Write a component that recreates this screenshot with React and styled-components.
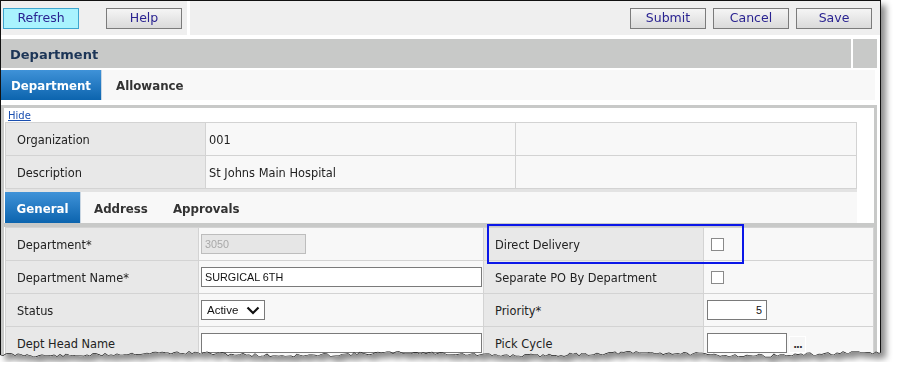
import React from 'react';
import styled, { createGlobalStyle } from 'styled-components';

// torn bottom edge of the screenshot, seeded so it is the same every run
const tearPoints = (() => {
  let s = 11;
  const rnd = () => {
    s = (s * 9301 + 49297) % 233280;
    return s / 233280;
  };
  const pts = [];
  for (let x = 0; x <= 884; x += 3) {
    pts.push([x, 353 + Math.sin(x / 37) * 1.4 + rnd() * 3.2]);
  }
  return pts;
})();

const clipPath = `polygon(0 0, 884px 0, ${tearPoints
  .slice()
  .reverse()
  .map(([x, y]) => `${x}px ${y.toFixed(1)}px`)
  .join(', ')})`;

const tearLine = tearPoints.map(([x, y]) => `${x},${y.toFixed(1)}`).join(' ');

const GlobalStyle = createGlobalStyle`
  html, body {
    margin: 0;
    padding: 0;
    background: #fff;
  }
  body {
    font-family: "DejaVu Sans", Verdana, sans-serif;
  }
`;

const Shot = styled.div`
  width: 884px;
  filter: drop-shadow(5px 5px 3px rgba(0, 0, 0, 0.45));
`;

const Frame = styled.div`
  position: relative;
  width: 881px;
  height: 362px;
  box-sizing: border-box;
  border: 1px solid #111;
  border-bottom: none;
  background: #fff;
  overflow: hidden;
`;

const TearEdge = styled.svg`
  position: absolute;
  left: -1px;
  top: -1px;
  pointer-events: none;
`;

const Toolbar = styled.div`
  display: flex;
  height: 34px;
  background: #efefef;
`;

const ToolGroup = styled.div`
  display: flex;
  align-items: center;
  gap: ${p => p.$gap}px;
  ${p => (p.$right
    ? 'flex: 1; justify-content: flex-end; padding-right: 8px;'
    : 'width: 184px; padding-left: 2px; border-right: 3px solid #fff;')}
`;

const ToolButton = styled.button`
  width: 76px;
  height: 21px;
  padding: 0 0 1px;
  font-family: "DejaVu Sans", Verdana, sans-serif;
  font-size: 12.5px;
  color: #2a2391;
  border: 1px solid ${p => (p.$primary ? '#3ea6cf' : '#7b7b7b')};
  background: ${p => (p.$primary ? '#a9f3fe' : 'linear-gradient(#f5f5f5, #dadada)')};
  cursor: pointer;
`;

const HeaderBar = styled.div`
  display: flex;
  gap: 2px;
  height: 29px;
  margin: 4px 3px 0 0;
`;

const HeaderTitle = styled.div`
  flex: 1;
  display: flex;
  align-items: center;
  padding: 2px 0 0 9px;
  background: #c8c9c8;
  color: #1c3557;
  font-size: 13px;
  font-weight: bold;
`;

const HeaderEnd = styled.div`
  width: 24px;
  background: #c8c9c8;
`;

const TabRow = styled.div`
  display: flex;
  align-items: stretch;
  height: ${p => p.$h}px;
  margin-top: ${p => p.$mt}px;
  margin-right: ${p => p.$mr}px;
  background: #f8f8f8;
`;

const Tab = styled.div`
  display: flex;
  align-items: center;
  justify-content: center;
  box-sizing: border-box;
  padding-top: 2px;
  ${p => (p.$w ? `width: ${p.$w}px;` : `padding-left: ${p.$pad}px; padding-right: ${p.$pad}px;`)}
  font-size: 11.8px;
  font-weight: bold;
  color: ${p => (p.$active ? '#fff' : '#333')};
  background: ${p => (p.$active ? 'linear-gradient(#3f92d8, #0c64ae)' : 'transparent')};
  border-right: ${p => (p.$active ? '1px solid #c9d6e2' : 'none')};
`;

const Panel = styled.div`
  margin: 5px 3px 0 0;
  border: 3px solid #c8c9c8;
  border-bottom: none;
  background: #fff;
`;

const OrgSection = styled.div`
  padding: 0 17px 0 1px;
`;

const HideLink = styled.a`
  display: block;
  height: 14px;
  padding: 1px 0 0 3px;
  box-sizing: border-box;
  font-size: 10px;
  line-height: 14px;
  color: #1a4fb0;
  text-decoration: underline;
`;

const Grid = styled.div`
  display: grid;
  grid-template-columns: ${p => p.$cols};
  grid-auto-rows: 33px;
  border-top: 1px solid #d3d3d3;
  border-left: 1px solid #d3d3d3;
`;

const Cell = styled.div`
  display: flex;
  align-items: center;
  gap: 2px;
  box-sizing: border-box;
  padding-left: ${p => (p.$label ? 11 : p.$pad ?? 2)}px;
  padding-top: ${p => (p.$label || p.$text ? 2 : 0)}px;
  border-right: 1px solid #d3d3d3;
  border-bottom: 1px solid #d3d3d3;
  background: ${p => (p.$label ? '#e8e8e8' : '#f8f8f8')};
  color: #222;
  font-size: 11.4px;
`;

const Rule = styled.div`
  height: ${p => p.$h}px;
  background: ${p => p.$c};
`;

const FormSection = styled.div`
  padding-left: 1px;
`;

const TextInput = styled.input`
  box-sizing: border-box;
  width: ${p => p.$w}px;
  height: 20px;
  padding: 0 ${p => (p.$right ? 4 : 3)}px 0 3px;
  margin: 0;
  font-family: "Liberation Sans", Arial, sans-serif;
  font-size: 10.8px;
  text-align: ${p => (p.$right ? 'right' : 'left')};
  color: ${p => (p.disabled ? '#a8a8a8' : '#111')};
  background: ${p => (p.disabled ? '#e6e6e6' : '#fff')};
  border: 1px solid ${p => (p.disabled ? '#bdbdbd' : '#7a7a7a')};
  border-radius: 0;
  outline: none;
`;

const SelectBox = styled.div`
  display: flex;
  align-items: center;
  justify-content: space-between;
  box-sizing: border-box;
  width: 64px;
  height: 20px;
  padding: 0 4px 0 5px;
  font-family: "Liberation Sans", Arial, sans-serif;
  font-size: 11.5px;
  color: #111;
  background: #fff;
  border: 1px solid #7a7a7a;
`;

const Check = styled.span`
  display: inline-block;
  box-sizing: border-box;
  width: 13px;
  height: 13px;
  background: #fff;
  border: 1px solid #8a8a8a;
`;

const LookupButton = styled.span`
  display: flex;
  align-items: flex-end;
  justify-content: center;
  box-sizing: border-box;
  width: 17px;
  height: 17px;
  margin-top: 3px;
  padding-bottom: 3px;
  background: #f6f6f6;
  border: 1px solid #fff;
  font-size: 10px;
  font-weight: bold;
  line-height: 8px;
  letter-spacing: -1px;
  color: #333;
`;

const Highlight = styled.div`
  position: absolute;
  left: 486px;
  top: 223px;
  width: 253px;
  height: 36px;
  border: 2px solid #0b17e8;
  pointer-events: none;
`;

const Chevron = () => (
  <svg width="14" height="9" viewBox="0 0 14 9">
    <path d="M1.5 1.5 L7 7 L12.5 1.5" fill="none" stroke="#111" strokeWidth="2.2" />
  </svg>
);

export default function App() {
  return (
    <>
      <GlobalStyle />
      <Shot>
        <Frame style={{ clipPath }}>
          <Toolbar>
            <ToolGroup $gap={27}>
              <ToolButton $primary>Refresh</ToolButton>
              <ToolButton>Help</ToolButton>
            </ToolGroup>
            <ToolGroup $right $gap={7}>
              <ToolButton>Submit</ToolButton>
              <ToolButton>Cancel</ToolButton>
              <ToolButton>Save</ToolButton>
            </ToolGroup>
          </Toolbar>

          <HeaderBar>
            <HeaderTitle>Department</HeaderTitle>
            <HeaderEnd />
          </HeaderBar>

          <TabRow $h={30} $mt={2} $mr={5}>
            <Tab $active $w={101}>Department</Tab>
            <Tab $pad={14}>Allowance</Tab>
          </TabRow>

          <Panel>
            <OrgSection>
              <HideLink href="#">Hide</HideLink>
              <Grid $cols="200px 310px 1fr">
                <Cell $label>Organization</Cell>
                <Cell $text $pad={3}>001</Cell>
                <Cell />
                <Cell $label>Description</Cell>
                <Cell $text $pad={3}>St Johns Main Hospital</Cell>
                <Cell />
              </Grid>
              <Rule $h={3} $c="#e3e3e3" />
              <TabRow $h={31} $mt={0} $mr={0}>
                <Tab $active $w={76}>General</Tab>
                <Tab $pad={13}>Address</Tab>
                <Tab $pad={12}>Approvals</Tab>
              </TabRow>
            </OrgSection>
            <Rule $h={4} $c="#c8c9c8" />
            <FormSection>
              <Grid $cols="193px 285px 220px 1fr">
                <Cell $label>Department*</Cell>
                <Cell><TextInput $w={105} defaultValue="3050" disabled /></Cell>
                <Cell $label>Direct Delivery</Cell>
                <Cell $pad={7}><Check /></Cell>

                <Cell $label>Department Name*</Cell>
                <Cell><TextInput $w={281} defaultValue="SURGICAL 6TH" /></Cell>
                <Cell $label>Separate PO By Department</Cell>
                <Cell $pad={7}><Check /></Cell>

                <Cell $label>Status</Cell>
                <Cell>
                  <SelectBox>Active<Chevron /></SelectBox>
                </Cell>
                <Cell $label>Priority*</Cell>
                <Cell $pad={3}><TextInput $w={60} $right defaultValue="5" /></Cell>

                <Cell $label>Dept Head Name</Cell>
                <Cell><TextInput $w={281} defaultValue="" /></Cell>
                <Cell $label>Pick Cycle</Cell>
                <Cell $pad={3}>
                  <TextInput $w={80} defaultValue="" />
                  <LookupButton>...</LookupButton>
                </Cell>
              </Grid>
            </FormSection>
          </Panel>

          <Highlight />

          <TearEdge width="884" height="370">
            <polyline points={tearLine} fill="none" stroke="#1a1a1a" strokeWidth="1.3" />
          </TearEdge>
        </Frame>
      </Shot>
    </>
  );
}
